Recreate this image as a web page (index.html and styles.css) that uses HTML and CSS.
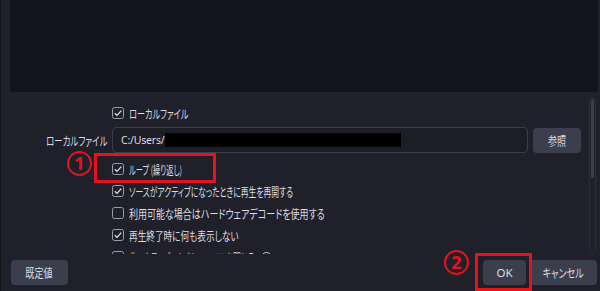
FILE: index.html
```html
<!DOCTYPE html>
<html lang="ja">
<head>
<meta charset="utf-8">
<link rel="stylesheet" href="styles.css">
</head>
<body>
<div class="app">
  <div class="preview"></div>
  <div class="middle">
    <div class="props">
      <div class="row">
        <span class="label"></span>
        <span class="check"><svg class="box" width="12" height="12" viewBox="0 0 12 12"><rect x="0.5" y="0.5" width="11" height="11" rx="2" class="sq"/><path d="M2.8 6.2 L5 8.4 L9.3 3.6" class="tick"/></svg><span class="t s-kana">ローカルファイル</span></span>
      </div>
      <div class="row field-row">
        <span class="label"><span class="t tr">ローカルファイル</span></span>
        <div class="input"><span class="path">C:/Users/</span><span class="redact"></span></div>
        <button class="btn browse"><span class="t tc">参照</span></button>
      </div>
      <div class="row loop-row">
        <span class="label"></span>
        <span class="check"><svg class="box" width="12" height="12" viewBox="0 0 12 12"><rect x="0.5" y="0.5" width="11" height="11" rx="2" class="sq"/><path d="M2.8 6.2 L5 8.4 L9.3 3.6" class="tick"/></svg><span class="t s-loop">ループ (繰り返し)</span></span>
      </div>
      <div class="row">
        <span class="label"></span>
        <span class="check"><svg class="box" width="12" height="12" viewBox="0 0 12 12"><rect x="0.5" y="0.5" width="11" height="11" rx="2" class="sq"/><path d="M2.8 6.2 L5 8.4 L9.3 3.6" class="tick"/></svg><span class="t s-narrow">ソースがアクティブになったときに再生を再開する</span></span>
      </div>
      <div class="row">
        <span class="label"></span>
        <span class="check"><svg class="box" width="12" height="12" viewBox="0 0 12 12"><rect x="0.5" y="0.5" width="11" height="11" rx="2" class="sq"/></svg><span class="t">利用可能な場合はハードウェアデコードを使用する</span></span>
      </div>
      <div class="row">
        <span class="label"></span>
        <span class="check"><svg class="box" width="12" height="12" viewBox="0 0 12 12"><rect x="0.5" y="0.5" width="11" height="11" rx="2" class="sq"/><path d="M2.8 6.2 L5 8.4 L9.3 3.6" class="tick"/></svg><span class="t s-mid">再生終了時に何も表示しない</span></span>
      </div>
      <div class="row">
        <span class="label"></span>
        <span class="check"><svg class="box" width="12" height="12" viewBox="0 0 12 12"><rect x="0.5" y="0.5" width="11" height="11" rx="2" class="sq"/></svg><span class="t s-narrow last">非アクティブのときにファイルを閉じる</span><span class="help">?</span></span>
      </div>
    </div>
    <div class="scrollbar"><div class="thumb"></div></div>
  </div>
  <div class="footer">
    <button class="btn defaults"><span class="t tc">既定値</span></button>
    <div class="spacer"></div>
    <button class="btn ok">OK</button>
    <button class="btn cancel"><span class="t tc">キャンセル</span></button>
  </div>
  <div class="anno-box box1"></div>
  <div class="anno-box box2"></div>
  <div class="anno-num num1">1</div>
  <div class="anno-num num2">2</div>
</div>
</body>
</html>
```
FILE: styles.css
```css
* { box-sizing: border-box; }
html, body {
  margin: 0;
  padding: 0;
  background: #1f2029;
}
body {
  width: 600px;
  height: 291px;
  overflow: hidden;
  font-family: "Noto Sans CJK JP", "Noto Sans", sans-serif;
  font-size: 12px;
  color: #dcdde2;
  font-feature-settings: "palt" 1;
}
.app {
  position: relative;
  width: 600px;
  height: 291px;
  display: flex;
  flex-direction: column;
  border-left: 1px solid #15161b;
}
.preview {
  height: 92px;
  margin-left: 9px;
  margin-right: 2px;
  background: #131419;
  flex: none;
}
.middle {
  height: 162px;
  display: flex;
  flex: none;
}
.props {
  flex: 1;
  overflow: hidden;
  padding: 10px 8px 0 0;
}
.row {
  display: flex;
  align-items: center;
  height: 22px;
}
.label {
  width: 106px;
  margin-right: 5px;
  text-align: right;
  white-space: nowrap;
  flex: none;
}
.t {
  display: inline-block;
  white-space: nowrap;
  transform: scaleX(0.75);
  transform-origin: left center;
}
.s-kana { transform: scaleX(0.68); }
.s-loop { transform: scaleX(0.6); }
.s-narrow { transform: scaleX(0.65); }
.s-mid { transform: scaleX(0.72); }
.tr { transform-origin: right center; transform: scaleX(0.7); }
.tc { transform-origin: center center; transform: scaleX(0.76); }
.check {
  display: flex;
  align-items: center;
  white-space: nowrap;
}
.box {
  flex: none;
  margin-right: 5px;
}
.sq {
  fill: #1f2029;
  stroke: #9a9dab;
  stroke-width: 1;
}
.tick {
  fill: none;
  stroke: #e2e3e8;
  stroke-width: 1.3;
}
.last { width: 132px; }
.help {
  display: inline-flex;
  width: 11px;
  height: 11px;
  border-radius: 50%;
  border: 1px solid #c8c9d0;
  font-size: 8px;
  align-items: center;
  justify-content: center;
}
.field-row {
  margin-top: 3px;
  height: 26px;
}
.input {
  width: 417px;
  height: 26px;
  margin-right: 5px;
  border: 1px solid #3b3e4c;
  border-radius: 4px;
  background: #1c1d25;
  display: flex;
  align-items: center;
  padding-left: 8px;
}
.path {
  font-family: "Noto Sans", sans-serif;
  font-size: 10.5px;
  letter-spacing: -0.2px;
}
.redact {
  width: 236px;
  height: 14px;
  background: #000;
  margin-left: 1px;
}
.loop-row {
  margin-top: 5px;
}
.btn {
  font: inherit;
  color: #dcdde2;
  background: #3b3e4c;
  border: none;
  border-radius: 4px;
  height: 25px;
  padding: 0;
  display: flex;
  align-items: center;
  justify-content: center;
  overflow: hidden;
}
.browse {
  width: 48px;
}
.scrollbar {
  width: 7px;
  margin: 5px 4px 1px 0;
  border: 1px solid #2b2d37;
  border-radius: 4px;
  padding: 1px 0;
  flex: none;
}
.thumb {
  height: 79px;
  background: #3b3e4c;
  border-radius: 3px;
  margin: 0 1px;
}
.footer {
  display: flex;
  align-items: center;
  padding: 6px 3px 0 10px;
  height: 31px;
}
.spacer { flex: 1; }
.defaults { width: 57px; }
.ok { width: 43px; margin-right: 3px; font-family: "Noto Sans", sans-serif; font-size: 11.5px; }
.cancel { width: 68px; }
.anno-box {
  position: absolute;
  border: 3px solid #e8121c;
}
.box1 { left: 93px; top: 153px; width: 122px; height: 30px; }
.box2 { left: 474px; top: 253px; width: 57px; height: 38px; }
.anno-num {
  position: absolute;
  width: 25px;
  height: 25px;
  border: 2px solid #e8121c;
  border-radius: 50%;
  color: #e8121c;
  font-family: "Noto Sans", sans-serif;
  font-weight: 700;
  font-size: 18px;
  line-height: 21px;
  text-align: center;
}
.num1 { left: 66px; top: 151px; }
.num2 { left: 443px; top: 250px; }
```
